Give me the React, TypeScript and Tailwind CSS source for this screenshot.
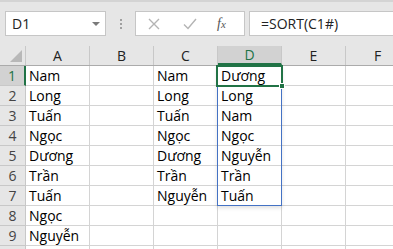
import React from 'react'

const cols = ['A', 'B', 'C', 'D', 'E', 'F']

const data: Record<string, string[]> = {
  A: ['Nam', 'Long', 'Tuấn', 'Ngọc', 'Dương', 'Trần', 'Tuấn', 'Ngọc', 'Nguyễn'],
  C: ['Nam', 'Long', 'Tuấn', 'Ngọc', 'Dương', 'Trần', 'Nguyễn'],
  D: ['Dương', 'Long', 'Nam', 'Ngọc', 'Nguyễn', 'Trần', 'Tuấn'],
}

const font = { fontFamily: '"Open Sans", "Noto Sans", sans-serif' }

function Toolbar() {
  return (
    <div className="h-[46px] bg-[#e6e6e6] border-t-[2px] border-[#d4d4d4] flex items-start">
      {/* name box */}
      <div className="ml-[5px] mt-[9px] w-[101px] h-[25px] bg-white border border-[#c6c6c6] flex items-center justify-between pl-[6px] pr-[4px]">
        <span className="text-[14px] text-[#222]" style={font}>D1</span>
        <svg width="10" height="6" viewBox="0 0 10 6"><path d="M1 1h8L5 5z" fill="#7a7a7a" /></svg>
      </div>
      {/* separator dots */}
      <div className="ml-[14px] mt-[17px] flex flex-col gap-[2px]">
        <div className="w-[2px] h-[2px] bg-[#a0a0a0]" />
        <div className="w-[2px] h-[2px] bg-[#a0a0a0]" />
        <div className="w-[2px] h-[2px] bg-[#a0a0a0]" />
      </div>
      {/* cancel / enter / fx */}
      <div className="ml-[13px] mt-[9px] w-[110px] h-[25px] bg-white border border-[#c6c6c6] flex items-center">
        <svg className="ml-[12px]" width="12" height="12" viewBox="0 0 12 12">
          <path d="M1 1l10 10M11 1L1 11" stroke="#b4b4b4" strokeWidth="1.4" fill="none" />
        </svg>
        <svg className="ml-[23px]" width="14" height="12" viewBox="0 0 14 12">
          <path d="M1 6.5l4 4L13 1" stroke="#b4b4b4" strokeWidth="1.4" fill="none" />
        </svg>
        <span className="ml-[20px] text-[14px] text-[#555] italic leading-none" style={{ fontFamily: '"Liberation Serif", serif' }}>
          f<span className="text-[11px]">x</span>
        </span>
      </div>
      {/* formula input */}
      <div className="ml-[4px] mt-[9px] flex-1 h-[25px] bg-white border border-r-0 border-[#c6c6c6] flex items-center pl-[11px]">
        <span className="text-[14px] text-[#222]" style={font}>=SORT(C1#)</span>
      </div>
    </div>
  )
}

function Header() {
  return (
    <div className="flex h-[20px] bg-[#e6e6e6] border-b border-[#ababab]">
      <div className="w-[26px] shrink-0 border-r border-[#c8c8c8] relative">
        <svg className="absolute right-[3px] bottom-[3px]" width="12" height="12" viewBox="0 0 12 12">
          <path d="M12 0V12H0z" fill="#b8b8b8" />
        </svg>
      </div>
      {cols.map((c) => (
        <div
          key={c}
          className={
            c === 'D'
              ? 'w-[64px] shrink-0 bg-[#d2d2d2] border-r border-[#c8c8c8] border-b-2 border-b-[#217346] flex items-center justify-center text-[14px] text-[#217346]'
              : 'w-[64px] shrink-0 border-r border-[#c8c8c8] flex items-center justify-center text-[14px] text-[#222]'
          }
          style={font}
        >
          {c}
        </div>
      ))}
    </div>
  )
}

function Row({ n }: { n: number }) {
  const label = n <= 9 ? n : ''
  return (
    <div className="flex h-[20px]">
      <div
        className={
          n === 1
            ? 'w-[26px] shrink-0 bg-[#d2d2d2] border-r-2 border-r-[#217346] border-b border-[#c8c8c8] flex items-center justify-center text-[14px] text-[#217346]'
            : 'w-[26px] shrink-0 bg-[#e6e6e6] border-r border-b border-[#c8c8c8] flex items-center justify-center text-[14px] text-[#444]'
        }
        style={font}
      >
        {label}
      </div>
      {cols.map((c) => (
        <div
          key={c}
          className="w-[64px] shrink-0 border-r border-b border-[#d4d4d4] flex items-center pl-[3px] text-[14px] text-black whitespace-nowrap overflow-visible"
          style={font}
        >
          {data[c]?.[n - 1] ?? ''}
        </div>
      ))}
    </div>
  )
}

export default function App() {
  return (
    <div className="w-[393px] h-[249px] overflow-hidden bg-white">
      <Toolbar />
      <Header />
      <div className="relative">
        {Array.from({ length: 10 }, (_, i) => (
          <Row key={i} n={i + 1} />
        ))}
        {/* spill range D1:D7 */}
        <div className="absolute left-[217px] top-[0px] w-[65px] h-[140px] border border-[#4472c4] shadow-[0_2px_4px_rgba(0,0,0,0.12)] pointer-events-none" />
        {/* active cell D1 */}
        <div className="absolute left-[216px] top-[-1px] w-[67px] h-[22px] border-2 border-[#217346] pointer-events-none" />
        <div className="absolute left-[279px] top-[17px] w-[6px] h-[6px] bg-[#217346] border border-white pointer-events-none" />
      </div>
    </div>
  )
}
